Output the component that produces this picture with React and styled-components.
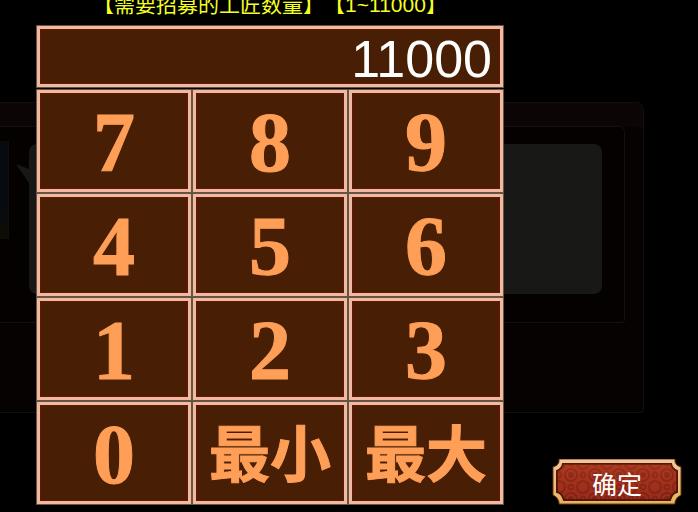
import React, { useState } from "react";
import styled, { createGlobalStyle } from "styled-components";

const GlobalStyle = createGlobalStyle`
  * { box-sizing: border-box; }
  body {
    margin: 0;
    background: #000;
    font-family: "Liberation Sans", "Noto Sans CJK SC", sans-serif;
  }
  button, input { font: inherit; margin: 0; }
`;

const Screen = styled.main`
  position: relative;
  isolation: isolate;
  min-height: 100vh;
  overflow: hidden;
  padding: 0 16px 7px 36px;
  display: flex;
  align-items: flex-end;
  gap: 48px;
`;

const DimmedScene = styled.div`
  position: absolute;
  inset: 0;
  z-index: -1;
  padding: 102px 54px 0 0;
`;

const ScenePanel = styled.div`
  height: 311px;
  padding: 23px 18px 0 0;
  background: #060202;
  border: 1px solid #11100d;
  border-left: 0;
  border-radius: 0 8px 3px 0;
  box-shadow: inset 0 24px #0b0605;
`;

const SceneFrame = styled.div`
  display: flex;
  align-items: flex-start;
  height: 197px;
  padding: 14px 22px 0 0;
  background: #050101;
  border: 1px solid #15100e;
  border-left: 0;
  border-radius: 0 6px 4px 0;
`;

const Portrait = styled.div`
  flex: 0 0 9px;
  height: 98px;
  background: linear-gradient(#070b10 65%, #0f0d04);
  border-right: 1px solid #110e0b;
`;

const BubbleTail = styled.svg`
  flex: none;
  width: 20px;
  height: 50px;
`;

const Bubble = styled.div`
  flex: 1;
  height: 150px;
  margin-top: 3px;
  background: #181917;
  border-radius: 8px;
  align-self: flex-start;
`;

const Keypad = styled.section`
  flex: 1;
  min-width: 0;
`;

const Title = styled.h1`
  margin: -9px 0 6px;
  font-size: 21px;
  line-height: 28px;
  font-weight: 400;
  color: #f4ff22;
  text-align: center;
  white-space: nowrap;
  text-spacing-trim: space-all;
`;

const Display = styled.input`
  display: block;
  width: 100%;
  height: 63px;
  padding: 4px 8px 0;
  border: 4px solid #efb9a2;
  outline: 1px solid #67513f;
  outline-offset: -1px;
  background: #481f04;
  box-shadow: inset 0 0 0 1px #681504;
  color: #fff;
  && { font-size: 52px; line-height: 52px; }
  text-align: right;
`;

const Keys = styled.div`
  display: grid;
  grid-template-columns: repeat(3, minmax(0, 1fr));
  gap: 2px;
  margin-top: 1px;
  padding: 1px;
  background: #665341;
`;

const Key = styled.button`
  height: 102px;
  display: flex;
  align-items: center;
  justify-content: center;
  border: 3px solid #efb9a2;
  background: #481f04;
  box-shadow: inset 0 0 0 1px #681504;
  color: #ff9f57;
  -webkit-text-stroke: 1px #ff9f57;
  white-space: nowrap;
  cursor: pointer;
  && {
    padding: ${(p) => (p.$word ? "0 0 4px" : "4px 0 0")};
    font-family: ${(p) =>
      p.$word
        ? '"Noto Sans CJK SC", sans-serif'
        : '"Liberation Serif", serif'};
    font-size: ${(p) => (p.$word ? "61px" : "84px")};
    line-height: 76px;
    font-weight: 700;
  }
`;

const Confirm = styled.button`
  position: relative;
  flex: 0 0 130px;
  height: 46px;
  padding: 5px 0 0;
  border: 0;
  background: none;
  color: #fff;
  cursor: pointer;
  && { font-size: 25px; line-height: 36px; }
`;

const Plaque = styled.svg`
  position: absolute;
  inset: 0;
  width: 100%;
  height: 100%;
`;

const ConfirmText = styled.span`
  position: relative;
`;

const KEYS = ["7", "8", "9", "4", "5", "6", "1", "2", "3", "0", "最小", "最大"];
const MIN = 1;
const MAX = 11000;

function ConfirmPlaque() {
  return (
    <Plaque viewBox="0 0 130 46" preserveAspectRatio="none" aria-hidden="true">
      <defs>
        <pattern id="brocade" width="24" height="24" patternUnits="userSpaceOnUse" x="7" y="4">
          <rect width="24" height="24" fill="#a8341f" />
          <g fill="none" stroke="#8c2517" strokeWidth="2">
            <circle cx="12" cy="12" r="6" />
            <circle cx="12" cy="12" r="2" fill="#8c2517" />
            <circle cx="0" cy="0" r="6" />
            <circle cx="24" cy="0" r="6" />
            <circle cx="0" cy="24" r="6" />
            <circle cx="24" cy="24" r="6" />
            <path d="M0 9q5 3 0 6M24 9q-5 3 0 6M9 0q3 5 6 0M9 24q3-5 6 0" />
          </g>
        </pattern>
        <linearGradient id="gold" x1="0" y1="0" x2="0" y2="1">
          <stop offset="0" stopColor="#f7c696" />
          <stop offset="0.6" stopColor="#edbd78" />
          <stop offset="1" stopColor="#e5b55a" />
        </linearGradient>
        <linearGradient id="shade" x1="0" y1="0" x2="0" y2="1">
          <stop offset="0" stopColor="#b94924" stopOpacity="0.3" />
          <stop offset="1" stopColor="#5c0d08" stopOpacity="0.2" />
        </linearGradient>
      </defs>
      <path d="M7 0H123V3Q124 7 129 8V36Q124 38 123 43V45H7V43Q6 38 1 36V8Q6 7 7 3Z" fill="url(#gold)" stroke="#6d3516" />
      <path d="M11 5H119Q120 10 125 12V33Q120 34 118 41H12Q10 34 5 33V12Q10 10 11 5Z" fill="url(#brocade)" stroke="#51160c" strokeWidth="2" />
      <path d="M11 5H119Q120 10 125 12V33Q120 34 118 41H12Q10 34 5 33V12Q10 10 11 5Z" fill="url(#shade)" />
    </Plaque>
  );
}

export default function App() {
  const [value, setValue] = useState(String(MAX));

  const press = (key) => {
    if (key === "最小") setValue(String(MIN));
    else if (key === "最大") setValue(String(MAX));
    else setValue((v) => String(Math.min(MAX, Number(v + key))));
  };

  return (
    <>
      <GlobalStyle />
      <Screen>
        <DimmedScene aria-hidden="true">
          <ScenePanel>
            <SceneFrame>
              <Portrait />
              <BubbleTail viewBox="0 0 20 50">
                <path d="M7 23L20 28V42Z" fill="#181917" />
              </BubbleTail>
              <Bubble />
            </SceneFrame>
          </ScenePanel>
        </DimmedScene>
        <Keypad>
          <Title id="amount-title">【需要招募的工匠数量】【1~11000】</Title>
          <Display aria-labelledby="amount-title" inputMode="numeric" readOnly value={value} />
          <Keys>
            {KEYS.map((key) => (
              <Key key={key} type="button" $word={key.length > 1} onClick={() => press(key)}>
                {key}
              </Key>
            ))}
          </Keys>
        </Keypad>
        <Confirm type="button">
          <ConfirmPlaque />
          <ConfirmText>确定</ConfirmText>
        </Confirm>
      </Screen>
    </>
  );
}
